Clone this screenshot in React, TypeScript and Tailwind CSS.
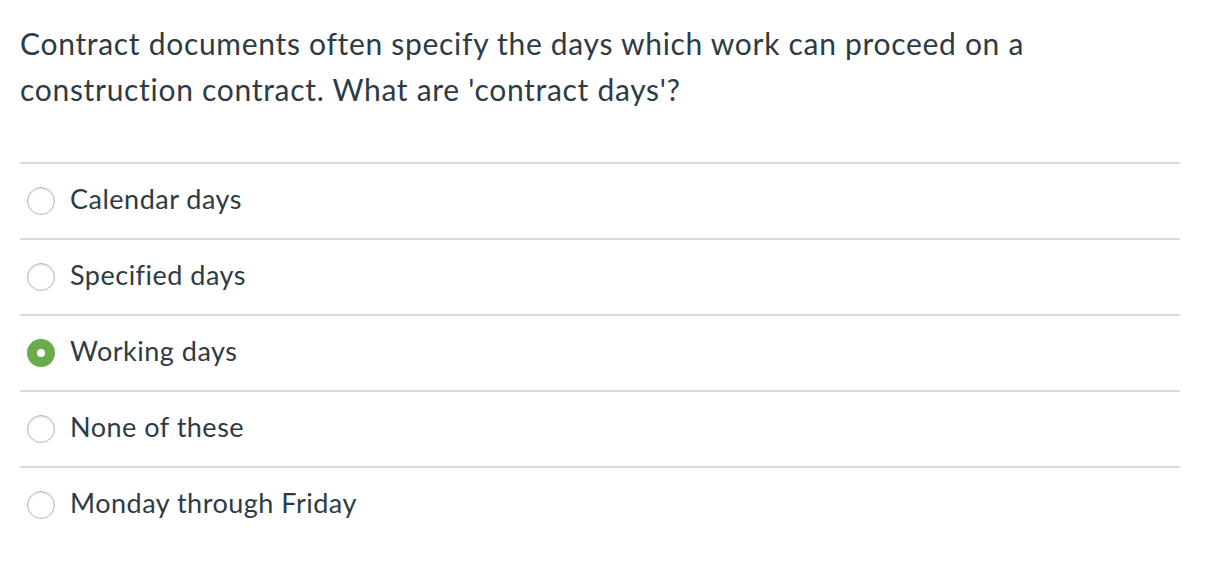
const options = [
  { label: "Calendar days", checked: false },
  { label: "Specified days", checked: false },
  { label: "Working days", checked: true },
  { label: "None of these", checked: false },
  { label: "Monday through Friday", checked: false },
];

function Radio({ checked }: { checked: boolean }) {
  if (checked) {
    return (
      <span className="flex h-[28px] w-[28px] shrink-0 items-center justify-center rounded-full bg-[#6aac4c]">
        <span className="h-[8px] w-[8px] rounded-full bg-white" />
      </span>
    );
  }
  return (
    <span className="h-[28px] w-[28px] shrink-0 rounded-full border border-[#b5b5b5] bg-white shadow-[inset_0_1px_2px_rgba(0,0,0,0.12)]" />
  );
}

export default function App() {
  return (
    <div className="min-h-[564px] w-[1210px] bg-white px-[20px] pt-[20px] text-[#2d3b45] [font-family:Lato,'Noto_Sans',sans-serif]">
      <p className="max-w-[1060px] text-[30px] leading-[46px] tracking-[0.7px]">
        Contract documents often specify the days which work can proceed on a
        construction contract. What are 'contract days'?
      </p>

      <div className="mt-[50px] w-[1160px]">
        {options.map((o) => (
          <div
            key={o.label}
            className="flex h-[76px] items-center gap-[15px] border-t-2 border-[#dadada] pl-[7px]"
          >
            <Radio checked={o.checked} />
            <span className="-mt-[5px] text-[27px] leading-none tracking-[0.5px]">
              {o.label}
            </span>
          </div>
        ))}
      </div>
    </div>
  );
}
